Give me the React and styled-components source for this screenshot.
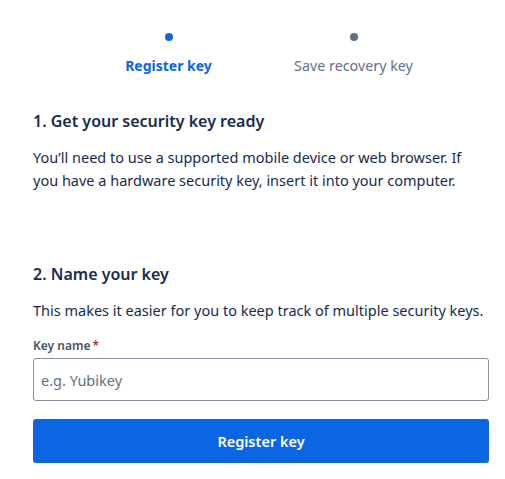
import React from "react"
import styled, { createGlobalStyle } from "styled-components"

const GlobalStyle = createGlobalStyle`
  body {
    margin: 0;
    background: #ffffff;
    font-family: "Segoe UI", "Noto Sans", sans-serif;
    color: #172b4d;
  }
`

const steps = [
  { label: "Register key", active: true },
  { label: "Save recovery key", active: false },
]

function App() {
  return (
    <Page>
      <GlobalStyle />
      <Stepper>
        {steps.map((s) => (
          <Step key={s.label}>
            <Dot $active={s.active} />
            <StepLabel $active={s.active}>{s.label}</StepLabel>
          </Step>
        ))}
      </Stepper>
      <Section>
        <Heading>1. Get your security key ready</Heading>
        <Text>
          You’ll need to use a supported mobile device or web browser. If you
          have a hardware security key, insert it into your computer.
        </Text>
      </Section>
      <Section $second>
        <Heading>2. Name your key</Heading>
        <Text>
          This makes it easier for you to keep track of multiple security keys.
        </Text>
        <Field>
          <Label>
            Key name<Required>*</Required>
          </Label>
          <Input placeholder="e.g. Yubikey" />
        </Field>
        <Button>Register key</Button>
      </Section>
    </Page>
  )
}

export default App

const Page = styled.div`
  width: 456px;
  padding: 0 16px 0 33px;
`
const Stepper = styled.div`
  display: flex;
  justify-content: center;
  padding-top: 33px;
`
const Step = styled.div`
  width: 185px;
  display: flex;
  flex-direction: column;
  align-items: center;
`
const Dot = styled.div`
  width: 8px;
  height: 8px;
  border-radius: 50%;
  background-color: ${(p) => (p.$active ? "#0c66e4" : "#626f86")};
`
const StepLabel = styled.span`
  margin-top: 15px;
  font-size: ${(p) => (p.$active ? "14px" : "14.3px")};
  line-height: 20px;
  font-weight: ${(p) => (p.$active ? 700 : 400)};
  color: ${(p) => (p.$active ? "#0c66e4" : "#626f86")};
`
const Section = styled.div`
  margin-top: ${(p) => (p.$second ? "70px" : "33px")};
`
const Heading = styled.h2`
  margin: 0;
  font-size: 16px;
  line-height: 24px;
  font-weight: 600;
  color: #172b4d;
`
const Text = styled.p`
  margin: 13px 0 0;
  font-size: 14.5px;
  line-height: 23px;
  color: #172b4d;
`
const Field = styled.div`
  margin-top: 16px;
  display: flex;
  flex-direction: column;
`
const Label = styled.label`
  font-size: 12px;
  line-height: 16px;
  font-weight: 600;
  color: #44546f;
`
const Required = styled.span`
  margin-left: 2px;
  color: #ae2e24;
`
const Input = styled.input`
  margin-top: 4px;
  box-sizing: border-box;
  width: 100%;
  height: 43px;
  padding: 0 7px;
  border: 1px solid #8590a2;
  border-radius: 3px;
  font-family: inherit;
  font-size: 14.5px;
  color: #172b4d;
  outline: none;

  &::placeholder {
    color: #626f86;
  }
`
const Button = styled.button`
  margin-top: 18px;
  width: 100%;
  height: 44px;
  border: none;
  border-radius: 3px;
  background-color: #0c66e4;
  color: #ffffff;
  font-family: inherit;
  font-size: 14.5px;
  font-weight: 600;
  cursor: pointer;

  &:hover {
    background-color: #0055cc;
  }
`
